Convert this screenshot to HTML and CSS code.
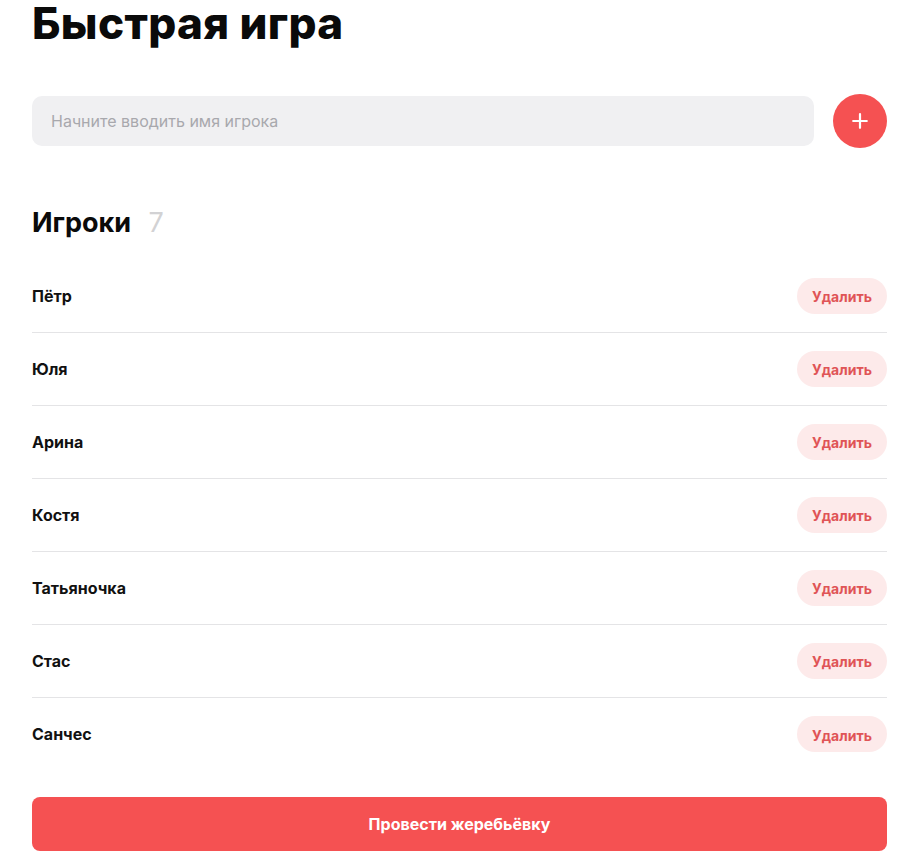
FILE: index.html
```html
<!DOCTYPE html>
<html lang="ru">
<head>
<meta charset="utf-8">
<title>Быстрая игра</title>
<link rel="stylesheet" href="styles.css">
</head>
<body>
<main class="page">
  <h1 class="title">Быстрая игра</h1>
  <div class="add-row">
    <input class="name-input" type="text" placeholder="Начните вводить имя игрока">
    <button class="add-btn" aria-label="Добавить">
      <svg width="16" height="16" viewBox="0 0 16 16"><path d="M8 1.2v13.6M1.2 8h13.6" stroke="#fff" stroke-width="2.2" stroke-linecap="round" fill="none"/></svg>
    </button>
  </div>
  <h2 class="players-title">Игроки <span class="count">7</span></h2>
  <ul class="players">
    <li class="player"><span class="player-name">Пётр</span><button class="del-btn">Удалить</button></li>
    <li class="player"><span class="player-name">Юля</span><button class="del-btn">Удалить</button></li>
    <li class="player"><span class="player-name">Арина</span><button class="del-btn">Удалить</button></li>
    <li class="player"><span class="player-name">Костя</span><button class="del-btn">Удалить</button></li>
    <li class="player"><span class="player-name">Татьяночка</span><button class="del-btn">Удалить</button></li>
    <li class="player"><span class="player-name">Стас</span><button class="del-btn">Удалить</button></li>
    <li class="player"><span class="player-name">Санчес</span><button class="del-btn">Удалить</button></li>
  </ul>
  <button class="draw-btn">Провести жеребьёвку</button>
</main>
</body>
</html>
```

FILE: styles.css
```css
* { box-sizing: border-box; }
html, body { margin: 0; padding: 0; background: #fff; }
body {
  font-family: Inter, "Noto Sans", "Liberation Sans", sans-serif;
  color: #111;
}
.page {
  padding: 0 33px 0 32px;
}
.title {
  margin: 0;
  font-size: 44px;
  line-height: 46px;
  font-weight: 800;
  letter-spacing: 0.35px;
  color: #0a0a0a;
}
.add-row {
  margin-top: 48px;
  display: flex;
  align-items: center;
  gap: 19px;
}
.name-input {
  flex: 1;
  height: 50px;
  border: none;
  outline: none;
  border-radius: 10px;
  background: #f0f0f2;
  padding: 0 19px;
  font-family: inherit;
  font-size: 16px;
  color: #111;
}
.name-input::placeholder { color: #a8a8ad; }
.add-btn {
  width: 54px;
  height: 54px;
  border-radius: 50%;
  border: none;
  background: #f55152;
  display: flex;
  align-items: center;
  justify-content: center;
  padding: 0;
  flex: none;
}
.players-title {
  margin: 61px 0 0;
  font-size: 27px;
  line-height: 28px;
  font-weight: 700;
  color: #0a0a0a;
}
.count {
  font-weight: 400;
  color: #d2d2d4;
  margin-left: 11px;
}
.players {
  list-style: none;
  margin: 23px 0 0;
  padding: 0;
}
.player {
  height: 73px;
  display: flex;
  align-items: center;
  justify-content: space-between;
  border-bottom: 1px solid #e4e4e6;
  padding-bottom: 1px;
}
.player:last-child { border-bottom: none; height: 72px; padding-bottom: 0; }
.player-name {
  font-size: 16px;
  font-weight: 700;
  color: #111;
}
.del-btn {
  height: 36px;
  width: 90px;
  border: none;
  border-radius: 18px;
  background: #fdeaea;
  color: #e05456;
  font-family: inherit;
  font-size: 14px;
  font-weight: 700;
  padding: 2px 0 0;
}
.draw-btn {
  display: block;
  width: 100%;
  margin-top: 27px;
  height: 54px;
  border: none;
  border-radius: 8px;
  background: #f55152;
  color: #fff;
  font-family: inherit;
  font-size: 16px;
  font-weight: 700;
}
```
